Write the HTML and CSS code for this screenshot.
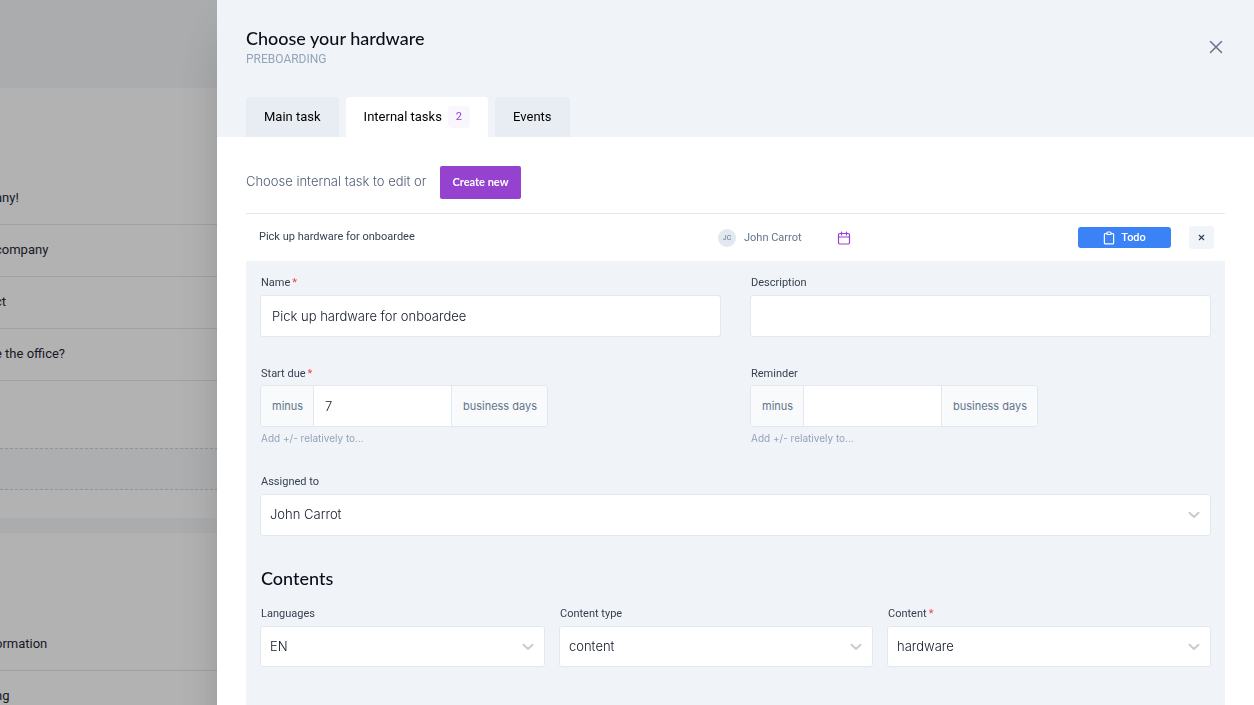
FILE: index.html
```html
<!DOCTYPE html>
<html lang="en">
<head>
<meta charset="utf-8">
<meta name="viewport" content="width=device-width, initial-scale=1">
<title>Choose your hardware</title>
<link rel="stylesheet" href="styles.css">
</head>
<body>
<main class="page">
  <section class="card card-first">
    <ul class="tasks">
      <li>any!</li>
      <li>company</li>
      <li>ct</li>
      <li>e the office?</li>
    </ul>
    <div class="dropzone"></div>
  </section>
  <section class="card card-second">
    <ul class="tasks">
      <li>ormation</li>
      <li>ng</li>
    </ul>
  </section>
</main>
<div class="overlay">
  <div class="drawer" role="dialog" aria-labelledby="drawer-title">
    <header class="drawer-head">
      <div class="title-row">
        <div>
          <h1 id="drawer-title">Choose your hardware</h1>
          <p class="phase">PREBOARDING</p>
        </div>
        <button class="close" type="button" aria-label="Close">
          <svg width="14" height="14" viewBox="0 0 14 14" fill="none" stroke="currentColor" stroke-width="1.5" stroke-linecap="round"><path d="M1.5 1.5l11 11M12.5 1.5l-11 11"/></svg>
        </button>
      </div>
      <nav class="tabs">
        <button class="tab" type="button">Main task</button>
        <button class="tab tab-active" type="button">Internal tasks <span class="count">2</span></button>
        <button class="tab" type="button">Events</button>
      </nav>
    </header>
    <div class="drawer-body">
      <div class="intro">
        <span class="intro-text">Choose internal task to edit or</span>
        <button class="create" type="button">Create new</button>
      </div>
      <div class="task-row">
        <span class="task-name">Pick up hardware for onboardee</span>
        <span class="task-meta">
          <span class="person"><span class="avatar">JC</span>John Carrot</span>
          <svg class="calendar" width="14" height="14" viewBox="0 0 14 14" fill="none" stroke="currentColor" stroke-width="1.2" stroke-linecap="round" stroke-linejoin="round"><rect x="1.5" y="2.5" width="11" height="10.5" rx="1.2"/><path d="M1.5 6h11M4.5 1v3M9.5 1v3"/></svg>
        </span>
        <span class="task-actions">
          <button class="todo" type="button">
            <svg width="12" height="14" viewBox="0 0 12 14" fill="none" stroke="currentColor" stroke-width="1.2" stroke-linejoin="round"><path d="M4 2.5H2.4a1 1 0 0 0-1 1v8.400a1 1 0 0 0 1 1h7.200a1 1 0 0 0 1-1V3.500a1 1 0 0 0-1-1H8"/><path d="M4 2a1 1 0 0 1 1-1h2a1 1 0 0 1 1 1v1.500H4z"/></svg>
            Todo
          </button>
          <button class="remove" type="button" aria-label="Remove">
            <svg width="7" height="7" viewBox="0 0 7 7" fill="none" stroke="currentColor" stroke-width="1.200"><path d="M1 1l5 5M6 1L1 6"/></svg>
          </button>
        </span>
      </div>
      <form class="form">
        <div class="pair">
          <div class="field">
            <label for="name">Name<span class="req">*</span></label>
            <input class="control" id="name" type="text" value="Pick up hardware for onboardee">
          </div>
          <div class="field">
            <label for="description">Description</label>
            <input class="control" id="description" type="text">
          </div>
        </div>
        <div class="pair pair-due">
          <div class="field">
            <label for="due">Start due<span class="req">*</span></label>
            <div class="group">
              <span class="addon">minus</span>
              <input class="group-input" id="due" type="text" value="7">
              <span class="addon addon-end">business days</span>
            </div>
            <p class="help">Add +/- relatively to...</p>
          </div>
          <div class="field">
            <label for="reminder">Reminder</label>
            <div class="group">
              <span class="addon">minus</span>
              <input class="group-input" id="reminder" type="text">
              <span class="addon addon-end">business days</span>
            </div>
            <p class="help">Add +/- relatively to...</p>
          </div>
        </div>
        <div class="field">
          <label for="assigned">Assigned to</label>
          <div class="select">
            <select class="control" id="assigned"><option>John Carrot</option></select>
            <svg class="chevron" width="12" height="8" viewBox="0 0 12 8" fill="none" stroke="currentColor" stroke-width="2" stroke-linecap="round" stroke-linejoin="round"><path d="M1.500 1.700L6 6l4.500-4.300"/></svg>
          </div>
        </div>
        <h2>Contents</h2>
        <div class="triple">
          <div class="field">
            <label for="languages">Languages</label>
            <div class="select">
              <select class="control" id="languages"><option>EN</option></select>
              <svg class="chevron" width="12" height="8" viewBox="0 0 12 8" fill="none" stroke="currentColor" stroke-width="2" stroke-linecap="round" stroke-linejoin="round"><path d="M1.500 1.700L6 6l4.500-4.300"/></svg>
            </div>
          </div>
          <div class="field">
            <label for="content-type">Content type</label>
            <div class="select">
              <select class="control" id="content-type"><option>content</option></select>
              <svg class="chevron" width="12" height="8" viewBox="0 0 12 8" fill="none" stroke="currentColor" stroke-width="2" stroke-linecap="round" stroke-linejoin="round"><path d="M1.500 1.700L6 6l4.500-4.300"/></svg>
            </div>
          </div>
          <div class="field">
            <label for="content">Content<span class="req">*</span></label>
            <div class="select">
              <select class="control" id="content"><option>hardware</option></select>
              <svg class="chevron" width="12" height="8" viewBox="0 0 12 8" fill="none" stroke="currentColor" stroke-width="2" stroke-linecap="round" stroke-linejoin="round"><path d="M1.500 1.700L6 6l4.500-4.300"/></svg>
            </div>
          </div>
        </div>
      </form>
    </div>
  </div>
</div>
</body>
</html>
```

FILE: styles.css
```css
* { box-sizing: border-box; }
html { height: 100%; overflow: hidden; }
body {
  margin: 0;
  height: 100%;
  overflow: hidden;
  background: #f5f7fa;
  color: #374151;
  font-family: Roboto, "Liberation Sans", sans-serif;
  font-size: 13px;
}
h1, h2, p, ul { margin: 0; padding: 0; }
button, input, select { font: inherit; color: inherit; margin: 0; }
button { border: 0; cursor: pointer; }

/* Page behind the drawer */
.page {
  display: flex;
  flex-direction: column;
  gap: 15px;
  padding-top: 88px;
}
.card { background: #fff; }
.card-first { padding: 85px 0 28px; }
.card-second { padding: 86px 0; }
.tasks {
  list-style: none;
  color: #1f2937;
}
.tasks li {
  margin-left: -5px;
  padding: 14px 0 16px;
  border-bottom: 1px solid #e2e4f0;
  line-height: 21px;
}
.dropzone {
  height: 42px;
  margin-top: 67px;
  background: #f7fafc;
  border: dashed #cbd5e0;
  border-width: 1px 0;
}

/* Drawer */
.overlay {
  position: fixed;
  inset: 0;
  padding-left: 217px;
  overflow: hidden;
  background: rgba(0, 0, 0, 0.3);
}
.drawer {
  background: #fff;
  box-shadow: 0 25px 50px -12px rgba(0, 0, 0, 0.25);
}
.drawer-head {
  padding: 26px 29px 0;
  background: #f0f4f9;
}
.title-row {
  display: flex;
  align-items: flex-start;
  justify-content: space-between;
}
h1, h2 {
  color: #0b0f19;
  font-family: Lato, "Liberation Sans", sans-serif;
  font-size: 18px;
  font-weight: 500;
  line-height: 24px;
}
.phase {
  color: #94a3b8;
  font-size: 12px;
  line-height: 18px;
}
.close {
  display: flex;
  padding: 14px 2px;
  background: none;
  color: #64748b;
}
.tabs {
  display: flex;
  gap: 7px;
  margin-top: 29px;
}
.tab {
  display: flex;
  align-items: center;
  gap: 6px;
  height: 40px;
  padding: 0 18px 1px;
  border-radius: 4px 4px 0 0;
  background: #e8edf3;
  color: #000;
}
.tab-active { background: #fff; }
.count {
  padding: 0 8px;
  border-radius: 4px;
  background: #f9f6fd;
  color: #9543cf;
  font-size: 11px;
  line-height: 22px;
}
.drawer-body { padding: 29px 29px 0; }
.intro {
  display: flex;
  align-items: center;
  gap: 14px;
  padding-bottom: 14px;
  border-bottom: 1px solid #e2e8f0;
  color: #526075;
}
.intro-text {
  padding-bottom: 3px;
  font-family: Inter, "Liberation Sans", sans-serif;
  font-weight: 300;
}
.create {
  height: 33px;
  padding: 0 12px 2px;
  border-radius: 2px;
  background: #9543cf;
  color: #fff;
  font-family: Lato, "Liberation Sans", sans-serif;
  font-size: 11px;
  font-weight: 700;
}
.task-row {
  display: grid;
  grid-template-columns: 459px 1fr auto;
  align-items: center;
  height: 47px;
  padding: 0 11px 0 13px;
  font-size: 11px;
}
.task-name { padding-bottom: 3px; }
.task-meta {
  display: flex;
  align-items: center;
  gap: 35px;
  color: #64748b;
}
.person {
  display: flex;
  align-items: center;
  gap: 8px;
}
.avatar {
  width: 18px;
  border-radius: 50%;
  background: #e2e8f0;
  font-size: 7px;
  line-height: 18px;
  text-align: center;
}
.calendar { color: #9543cf; }
.task-actions {
  display: flex;
  align-items: center;
  gap: 18px;
}
.todo {
  display: flex;
  align-items: center;
  justify-content: center;
  gap: 6px;
  width: 93px;
  height: 21px;
  padding: 0;
  border-radius: 3px;
  background: #3b82f6;
  color: #fff;
  font-weight: 500;
}
.remove {
  display: flex;
  align-items: center;
  justify-content: center;
  width: 25px;
  height: 23px;
  padding: 0;
  border-radius: 3px;
  background: #f1f5f9;
  color: #334155;
}

/* Task form */
.form {
  padding: 14px 14px 120px;
  background: #f0f4f9;
}
.pair {
  display: grid;
  grid-template-columns: 1fr 1fr;
  gap: 29px;
  margin-bottom: 29px;
}
.triple {
  display: grid;
  grid-template-columns: 285fr 314fr 324fr;
  gap: 14px;
}
.field label {
  display: block;
  padding-left: 1px;
  margin-bottom: 5px;
  font-size: 11px;
  line-height: 15px;
}
.pair-due .field label { margin-bottom: 4px; }
.req {
  margin-left: 2px;
  color: #ef4444;
}
.control {
  display: block;
  width: 100%;
  height: 42px;
  padding: 0 11px 1px;
  border: 1px solid #e2e8f0;
  border-radius: 3px;
  background: #fff;
}
.control, .group {
  color: #111827;
  font-family: Inter, "Liberation Sans", sans-serif;
  font-weight: 300;
}
.select { position: relative; }
.select .control {
  padding: 0 9px 2px;
  appearance: none;
}
.triple .control { height: 41px; }
.chevron {
  position: absolute;
  top: 17px;
  right: 11px;
  color: #ccc;
  pointer-events: none;
}
.group {
  display: flex;
  width: 288px;
  height: 42px;
  border: 1px solid #e2e8f0;
  border-radius: 3px;
  background: #fff;
  overflow: hidden;
}
.addon {
  display: flex;
  align-items: center;
  padding: 0 10px 0 11px;
  border-right: 1px solid #e2e8f0;
  background: #f8fafc;
  color: #64748b;
  font-size: 11px;
  font-weight: 400;
}
.addon-end {
  border-right: 0;
  border-left: 1px solid #e2e8f0;
}
.group-input {
  flex: 1;
  min-width: 0;
  padding: 0 11px;
  border: 0;
  background: none;
}
.help {
  padding-left: 1px;
  margin-top: 4px;
  color: #94a3b8;
  font-family: Inter, "Liberation Sans", sans-serif;
  font-size: 10px;
  line-height: 14px;
}
h2 {
  margin: 30px 0 16px;
  padding-left: 1px;
}
```
